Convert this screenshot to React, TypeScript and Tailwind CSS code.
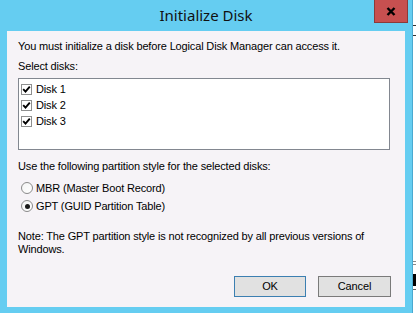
import React from "react";

const sans = { fontFamily: '"Liberation Sans", Arial, sans-serif' };

function CheckItem({ label }: { label: string }) {
  return (
    <div className="flex h-[16px] items-center gap-[4px]">
      <div className="flex h-[11px] w-[11px] items-center justify-center border border-[#8e8f8f] bg-white">
        <svg width="9" height="9" viewBox="0 0 9 9">
          <path d="M1.2 4.2 L3.5 6.6 L7.8 1.6" fill="none" stroke="#000" strokeWidth="1.9" />
        </svg>
      </div>
      <span>{label}</span>
    </div>
  );
}

function Radio({ label, checked }: { label: string; checked?: boolean }) {
  return (
    <div className="flex h-[18px] items-center gap-[3px] pl-[3px]">
      <div className="flex h-[12px] w-[12px] items-center justify-center rounded-full border border-[#8a8a8a] bg-gradient-to-br from-[#f4f4f4] to-white">
        {checked && <div className="h-[5px] w-[5px] rounded-full bg-[#1a1a1a]" />}
      </div>
      <span>{label}</span>
    </div>
  );
}

export default function App() {
  return (
    <div className="flex h-[313px] w-[416px] overflow-hidden bg-white" style={sans}>
      <div className="flex h-[313px] w-[413px] flex-col border-r border-[#4aa9d0] bg-[#65cdf1]">
        <div className="grid h-[31px] grid-cols-[1fr_auto_1fr]">
          <div />
          <div
            className="pt-[5px] text-[15px] leading-[20px] text-[#111]"
            style={{ fontFamily: '"Noto Sans", "Open Sans", sans-serif' }}
          >
            Initialize Disk
          </div>
          <div className="flex justify-end pr-[4px]">
            <div className="flex h-[23px] w-[34px] items-center justify-center border border-t-0 border-[#8c3a3a] bg-[#c75050]">
              <svg width="10" height="9" viewBox="0 0 10 9">
                <path d="M1.5 1 L8.5 8 M8.5 1 L1.5 8" stroke="#000" strokeWidth="2.4" />
              </svg>
            </div>
          </div>
        </div>

        <div className="mx-[7px] mb-[6px] flex flex-1 flex-col bg-[#f6f3f7] pl-[11px] pr-[14px] pt-[9px] text-[11px] leading-[13px] tracking-[-0.15px] text-black">
          <p>You must initialize a disk before Logical Disk Manager can access it.</p>
          <p className="mt-[7px]">Select disks:</p>
          <div className="mt-[5px] h-[72px] w-[372px] border border-[#828790] bg-white px-[2px] pt-[2px]">
            <CheckItem label="Disk 1" />
            <CheckItem label="Disk 2" />
            <CheckItem label="Disk 3" />
          </div>
          <p className="mt-[10px]">Use the following partition style for the selected disks:</p>
          <div className="mt-[6px]">
            <Radio label="MBR (Master Boot Record)" />
            <Radio label="GPT (GUID Partition Table)" checked />
          </div>
          <p className="mt-[15px]">
            Note: The GPT partition style is not recognized by all previous versions of
            <br />
            Windows.
          </p>
          <div className="mt-[20px] flex justify-end gap-[12px]">
            <button className="h-[21px] w-[72px] border border-[#3c7fb1] bg-[#e1e1e1] text-[11px]">OK</button>
            <button className="h-[21px] w-[73px] border border-[#7a7a7a] bg-[#e1e1e1] text-[11px]">Cancel</button>
          </div>
        </div>
      </div>
      <div className="flex flex-1 flex-col bg-white">
        <div className="mt-[25px] h-px bg-[#333]" />
        <div className="mt-[9px] h-px bg-[#333]" />
        <div className="mt-[225px] h-px bg-[#888]" />
        <div className="mt-[2px] h-px bg-[#888]" />
        <div className="mt-[9px] h-[12px] bg-black" />
        <div className="mt-[3px] h-px bg-[#666]" />
      </div>
    </div>
  );
}
